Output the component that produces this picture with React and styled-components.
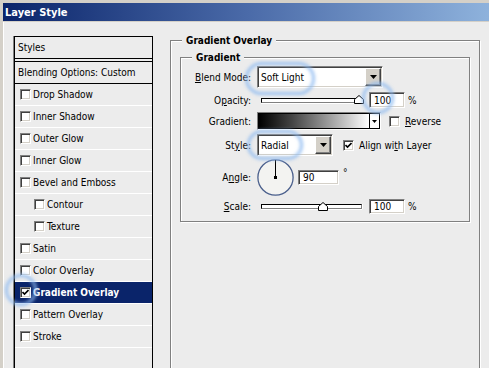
import React from 'react';
import styled, { createGlobalStyle } from 'styled-components';

const GlobalStyle = createGlobalStyle`
  html, body { margin: 0; padding: 0; background: #ececec; }
  body {
    width: 489px; height: 368px; overflow: hidden;
    font-family: "DejaVu Sans", "Liberation Sans", sans-serif;
    font-stretch: condensed;
    font-size: 10px; color: #000;
  }
`;

const Window = styled.div`
  position: relative;
  width: 489px;
  height: 368px;
  box-sizing: border-box;
  border-top: 3px solid #d4d0c8;
  border-left: 3px solid #d4d0c8;
  box-shadow: inset 1px 1px 0 #fff;
  background: #ececec;
  overflow: hidden;
`;

const TitleBar = styled.div`
  height: 18px;
  display: flex;
  align-items: center;
  padding-left: 2px;
  background: linear-gradient(to right, #0a246a 0%, #4a6aa8 50%, #8eb2dc 100%);
  border-bottom: 1px solid #d4d0c8;
`;

const Title = styled.span`
  color: #fff;
  font-weight: bold;
  font-size: 11px;
`;

const Body = styled.div`
  display: flex;
  align-items: flex-start;
  gap: 17px;
  padding: 14px 0 0 11px;
`;

const StylesList = styled.div`
  width: 139px;
  height: 400px;
  box-sizing: border-box;
  border: 1px solid #000;
  box-shadow: -1px 0 0 #808080;
  flex-shrink: 0;
`;

const ListHeader = styled.div`
  height: 21px;
  display: flex;
  align-items: center;
  padding-left: 3px;
  border-bottom: 4px double #000;
`;

const ListItem = styled.div`
  height: 21px;
  display: flex;
  align-items: center;
  gap: 2px;
  padding-left: ${p => (p.$plain ? 3 : p.$indent ? 19 : 5)}px;
  border-bottom: 1px solid ${p => (p.$plain ? '#000' : '#fff')};
  background: ${p => (p.$selected ? '#0a246a' : 'transparent')};
  color: ${p => (p.$selected ? '#fff' : '#000')};
  font-weight: ${p => (p.$selected ? 'bold' : 'normal')};
`;

const Box = styled.span`
  width: 11px;
  height: 11px;
  box-sizing: border-box;
  flex-shrink: 0;
  border: 1px solid;
  border-color: #808080 #fff #fff #808080;
  box-shadow: inset 1px 1px 0 #404040, inset -1px -1px 0 #d4d0c8;
  background: #fff;
  display: flex;
  align-items: center;
  justify-content: center;
`;

const CheckBox = ({ checked }) => (
  <Box>
    {checked && (
      <svg width="7" height="7" viewBox="0 0 7 7">
        <path d="M0.5 3 L2.5 5 L6.5 1" fill="none" stroke="#000" strokeWidth="1.6" />
      </svg>
    )}
  </Box>
);

const Group = styled.fieldset`
  margin: ${p => (p.$inner ? '0' : '-2px 0 0 0')};
  padding: ${p => (p.$inner ? '0 9px 7px 9px' : '4px 9px 0 9px')};
  width: ${p => (p.$inner ? 'auto' : '310px')};
  height: ${p => (p.$inner ? 'auto' : '420px')};
  box-sizing: border-box;
  border: 1px solid #808080;
  box-shadow: 1px 1px 0 #fff, inset 1px 1px 0 #fff;
`;

const Legend = styled.legend`
  font-weight: bold;
  padding: 0 4px;
  margin-left: 2px;
  line-height: 13px;
  background: #ececec;
`;

const Rows = styled.div`
  display: flex;
  flex-direction: column;
  gap: 4px;
  padding-top: 2px;
`;

const Row = styled.div`
  display: flex;
  align-items: center;
  height: ${p => p.$h}px;
  margin-top: ${p => p.$mt || 0}px;
`;

const Label = styled.span`
  width: 61px;
  margin-right: 6px;
  text-align: right;
  flex-shrink: 0;
`;

const Sunken = styled.div`
  box-sizing: border-box;
  width: ${p => p.$w}px;
  height: ${p => p.$h}px;
  margin-left: ${p => p.$ml || 0}px;
  border: 1px solid;
  border-color: #808080 #fff #fff #808080;
  box-shadow: inset 1px 1px 0 #404040, inset -1px -1px 0 #d4d0c8;
  background: #fff;
  display: flex;
  align-items: center;
  flex-shrink: 0;
`;

const SelectText = styled.span`
  flex: 1;
  padding-left: 3px;
`;

const NumText = styled.span`
  padding-left: 4px;
`;

const DropButton = styled.span`
  width: 16px;
  height: 18px;
  box-sizing: border-box;
  margin-right: 1px;
  background: #d4d0c8;
  border: 1px solid;
  border-color: #fff #404040 #404040 #fff;
  box-shadow: inset -1px -1px 0 #808080;
  display: flex;
  align-items: center;
  justify-content: center;
`;

const Arrow = ({ w = 7 }) => (
  <svg width={w} height={Math.ceil(w / 2)} viewBox={`0 0 ${w} ${Math.ceil(w / 2)}`}>
    <path d={`M0 0 H${w} L${w / 2} ${Math.ceil(w / 2)} Z`} fill="#000" />
  </svg>
);

const SliderWrap = styled.div`
  position: relative;
  width: 106px;
  height: 12px;
  display: flex;
  align-items: center;
  flex-shrink: 0;
`;

const Track = styled.div`
  margin-left: 4px;
  width: 101px;
  height: 5px;
  box-sizing: border-box;
  border: 1px solid #000;
  border-right-color: #808080;
  border-bottom-color: #808080;
  box-shadow: 0 1px 0 #fff, 1px 0 0 #fff;
  background: #fff;
`;

const Thumb = styled.svg`
  position: absolute;
  top: 1px;
  left: ${p => p.$pos}px;
`;

const Slider = ({ pos }) => (
  <SliderWrap>
    <Track />
    <Thumb $pos={pos} width="10" height="9" viewBox="0 0 10 9">
      <path d="M0.5 8.5 V4.5 L5 0.5 L9.5 4.5 V8.5 Z" fill="#fff" stroke="#000" />
    </Thumb>
  </SliderWrap>
);

const Unit = styled.span`
  margin-left: 3px;
`;

const GradientSwatch = styled.div`
  box-sizing: border-box;
  width: 124px;
  height: 18px;
  border: 1px solid;
  border-color: #808080 #fff #fff #808080;
  display: flex;
  flex-shrink: 0;
`;

const SwatchFill = styled.div`
  flex: 1;
  border: 1px solid #000;
  border-right: none;
  background: linear-gradient(to right, #000 0%, #444 30%, #bbb 75%, #fff 100%);
`;

const SwatchButton = styled.div`
  width: 11px;
  box-sizing: border-box;
  border: 1px solid #000;
  background: #fff;
  display: flex;
  align-items: center;
  justify-content: center;
`;

const CheckLabel = styled.label`
  display: flex;
  align-items: center;
  gap: 5px;
  margin-left: ${p => p.$ml}px;
`;

const Dial = styled.svg`
  flex-shrink: 0;
  margin-right: 4px;
`;

const Degree = styled.span`
  align-self: flex-start;
  margin-top: 8px;
  margin-left: 4px;
`;

const Glow = styled.span`
  position: absolute;
  left: ${p => p.$x - 3}px;
  top: ${p => p.$y - 3}px;
  width: ${p => p.$w}px;
  height: ${p => p.$h}px;
  box-sizing: border-box;
  border-radius: 999px;
  border: 3px solid rgba(140, 185, 240, 0.6);
  box-shadow: 0 0 2px 1px rgba(160, 198, 242, 0.45), inset 0 0 2px 1px rgba(160, 198, 242, 0.45);
  filter: blur(1px);
  pointer-events: none;
`;

const items = [
  { label: 'Drop Shadow' },
  { label: 'Inner Shadow' },
  { label: 'Outer Glow' },
  { label: 'Inner Glow' },
  { label: 'Bevel and Emboss' },
  { label: 'Contour', indent: true },
  { label: 'Texture', indent: true },
  { label: 'Satin' },
  { label: 'Color Overlay' },
  { label: 'Gradient Overlay', checked: true, selected: true },
  { label: 'Pattern Overlay' },
  { label: 'Stroke' },
];

export default function App() {
  return (
    <>
      <GlobalStyle />
      <Window>
        <TitleBar>
          <Title>Layer Style</Title>
        </TitleBar>
        <Body>
          <StylesList>
            <ListHeader>Styles</ListHeader>
            <ListItem $plain>Blending Options: Custom</ListItem>
            {items.map(it => (
              <ListItem key={it.label} $indent={it.indent} $selected={it.selected}>
                <CheckBox checked={it.checked} />
                <span>{it.label}</span>
              </ListItem>
            ))}
          </StylesList>
          <Group>
            <Legend>Gradient Overlay</Legend>
            <Group $inner>
              <Legend>Gradient</Legend>
              <Rows>
                <Row $h={22}>
                  <Label><u>B</u>lend Mode:</Label>
                  <Sunken $w={126} $h={22}>
                    <SelectText>Soft Light</SelectText>
                    <DropButton><Arrow /></DropButton>
                  </Sunken>
                </Row>
                <Row $h={16}>
                  <Label>O<u>p</u>acity:</Label>
                  <Slider pos={97} />
                  <Sunken $w={36} $h={16} $ml={6}>
                    <NumText>100</NumText>
                  </Sunken>
                  <Unit>%</Unit>
                </Row>
                <Row $h={18}>
                  <Label>Gradient:</Label>
                  <GradientSwatch>
                    <SwatchFill />
                    <SwatchButton><Arrow w={5} /></SwatchButton>
                  </GradientSwatch>
                  <CheckLabel $ml={8}>
                    <CheckBox />
                    <span><u>R</u>everse</span>
                  </CheckLabel>
                </Row>
                <Row $h={22}>
                  <Label>St<u>y</u>le:</Label>
                  <Sunken $w={76} $h={22}>
                    <SelectText>Radial</SelectText>
                    <DropButton><Arrow /></DropButton>
                  </Sunken>
                  <CheckLabel $ml={10}>
                    <CheckBox checked />
                    <span>Align wi<u>t</u>h Layer</span>
                  </CheckLabel>
                </Row>
                <Row $h={36} $mt={-1}>
                  <Label>A<u>n</u>gle:</Label>
                  <Dial width="37" height="37" viewBox="0 0 37 37">
                    <circle cx="18.5" cy="18.5" r="17.6" fill="#f3f3f1" stroke="#4a5f8c" strokeWidth="1.3" />
                    <line x1="18.5" y1="1" x2="18.5" y2="18.5" stroke="#000" strokeWidth="1" />
                    <rect x="17" y="17" width="3" height="3" fill="#000" />
                  </Dial>
                  <Sunken $w={41} $h={15}>
                    <NumText>90</NumText>
                  </Sunken>
                  <Degree>°</Degree>
                </Row>
                <Row $h={15}>
                  <Label><u>S</u>cale:</Label>
                  <Slider pos={61} />
                  <Sunken $w={36} $h={15} $ml={6}>
                    <NumText>100</NumText>
                  </Sunken>
                  <Unit>%</Unit>
                </Row>
              </Rows>
            </Group>
          </Group>
        </Body>
        <Glow $x={245} $y={62} $w={70} $h={33} />
        <Glow $x={362} $y={82} $w={32} $h={32} />
        <Glow $x={247} $y={130} $w={56} $h={30} />
        <Glow $x={5} $y={274} $w={32} $h={32} />
      </Window>
    </>
  );
}
